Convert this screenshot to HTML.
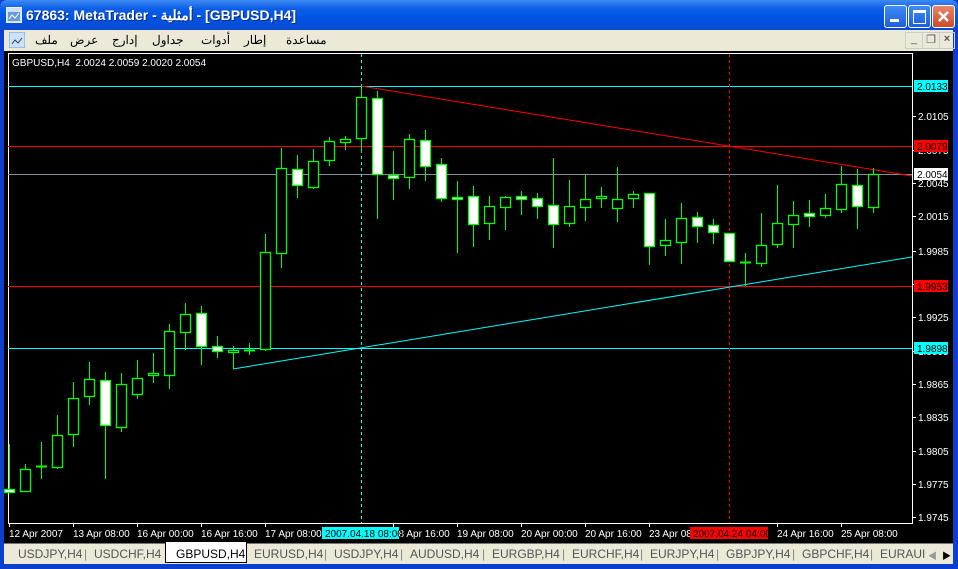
<!DOCTYPE html>
<html><head><meta charset="utf-8"><style>
body{margin:0;width:958px;height:569px;overflow:hidden;background:#0a3fd0;font-family:"Liberation Sans","Noto Sans CJK SC",sans-serif;position:relative}
#title{position:absolute;left:0;top:0;width:958px;height:30px;background:linear-gradient(#3d8bf5,#0a5ee6 30%,#0054e3 60%,#0a4bd0);border-radius:7px 7px 0 0}
#title .t{position:absolute;left:26px;top:7px;color:#fff;font-weight:bold;font-size:14px;text-shadow:1px 1px #0a2a80}
.wb{position:absolute;top:5px;width:21px;height:21px;border:1px solid #fff;border-radius:3px;background:linear-gradient(#3f8cf3,#1d5ee0)}
#menu{position:absolute;left:4px;top:30px;width:949px;height:21px;background:#ece9d8}
#menu span{position:absolute;top:3px;font-size:12px;color:#000}
#chart{position:absolute;left:4px;top:51px;width:949px;height:492px;background:#000}
#tabs{position:absolute;left:4px;top:543px;width:949px;height:20px;background:#ece9d8;border-top:1px solid #777}
#tabs span{position:absolute;top:3px;font-size:12px;color:#555}
#sv{position:absolute;left:0;top:0}
</style></head><body>
<div id="title">
<svg style="position:absolute;left:6px;top:7px" width="16" height="16"><rect x="0" y="0" width="16" height="16" fill="#cfe0f8" stroke="#fff"/><rect x="2" y="5" width="12" height="9" fill="#6a9ad8"/><path d="M3 12l3-4 3 3 4-5" stroke="#fff" fill="none"/></svg>
<div class="t">67863: MetaTrader - أمثلية - [GBPUSD,H4]</div>
<div class="wb" style="left:884px"><div style="position:absolute;left:5px;top:13px;width:9px;height:3px;background:#fff"></div></div>
<div class="wb" style="left:908px"><div style="position:absolute;left:4px;top:4px;width:11px;height:10px;border:1px solid #fff;border-top-width:3px"></div></div>
<div class="wb" style="left:932px;background:linear-gradient(#e8876a,#c94a2a)"><svg width="21" height="21"><path d="M6 6l9 9M15 6l-9 9" stroke="#fff" stroke-width="2.5"/></svg></div>
</div>
<div id="menu">
<svg style="position:absolute;left:5px;top:2px" width="16" height="16"><rect x="0" y="0" width="16" height="16" fill="#cfe0f8" stroke="#6a9ad8"/><path d="M3 12l3-4 3 3 4-5" stroke="#246" fill="none"/></svg>
<span style="left:31px">ملف</span><span style="left:66px">عرض</span><span style="left:108px">إدارج</span><span style="left:148px">جداول</span><span style="left:197px">أدوات</span><span style="left:240px">إطار</span><span style="left:282px">مساعدة</span>
<div style="position:absolute;left:901px;top:2px;width:16px;height:15px;border:1px solid #ccc;font-size:11px;text-align:center;color:#555">_</div>
<div style="position:absolute;left:918px;top:2px;width:16px;height:15px;border:1px solid #ccc;font-size:11px;text-align:center;color:#555">❐</div>
<div style="position:absolute;left:935px;top:2px;width:14px;height:15px;border:1px solid #ccc;font-size:11px;text-align:center;color:#555;font-weight:bold">×</div>
</div>
<div id="chart"></div>
<div id="tabs">
<span style="left:14px">USDJPY,H4</span><span style="left:80px;color:#888">|</span><span style="left:90px">USDCHF,H4</span>
<div style="position:absolute;left:161px;top:-2px;width:80px;height:20px;background:#fff;border:1px solid #000;border-top:none"></div><span style="left:172px;color:#000">GBPUSD,H4</span>
<span style="left:250px">EURUSD,H4</span><span style="left:320px;color:#888">|</span><span style="left:330px">USDJPY,H4</span><span style="left:396px;color:#888">|</span><span style="left:406px">AUDUSD,H4</span><span style="left:478px;color:#888">|</span><span style="left:488px">EURGBP,H4</span><span style="left:558px;color:#888">|</span><span style="left:568px">EURCHF,H4</span><span style="left:636px;color:#888">|</span><span style="left:646px">EURJPY,H4</span><span style="left:712px;color:#888">|</span><span style="left:722px">GBPJPY,H4</span><span style="left:788px;color:#888">|</span><span style="left:798px">GBPCHF,H4</span><span style="left:866px;color:#888">|</span><span style="left:876px">EURAUI</span>
<span style="left:924px;color:#999;font-size:9px;top:5px">◀</span><span style="left:938px;color:#000;font-size:9px;top:5px">▶</span>
</div>
<svg id="sv" width="958" height="569"></svg>
<script>
var c=[[9,444,492,489,492,1],[25,464,491,469,491,0],[41,442,479,466,467,0],[57,415,469,435,467,0],[73,382,447,398,434,0],[89,362,405,379,396,0],[105,372,479,380,425,1],[121,373,432,384,427,0],[137,360,399,378,394,0],[153,353,383,373,375,0],[169,324,389,331,375,0],[185,303,350,314,332,0],[201,306,365,313,346,1],[217,336,358,346,351,1],[233,346,369,350,352,0],[249,343,355,350,351,0],[265,234,351,252,349,0],[281,148,268,168,253,0],[297,155,198,169,185,1],[313,149,189,161,187,0],[329,137,166,141,160,0],[345,136,150,139,142,0],[361,86,153,97,138,0],[377,91,219,98,174,1],[393,151,200,175,178,1],[409,134,189,139,177,0],[425,130,181,140,166,1],[441,158,202,164,198,1],[457,181,253,197,199,1],[473,186,247,196,224,1],[489,196,240,206,223,0],[505,196,230,197,207,0],[521,191,215,196,199,1],[537,193,219,198,206,1],[553,158,248,205,224,1],[569,180,227,206,223,0],[585,174,221,199,207,0],[601,187,208,196,198,0],[617,167,222,199,208,0],[633,191,208,194,198,0],[649,193,265,193,246,1],[665,219,256,240,245,0],[681,203,264,218,242,0],[697,212,243,217,226,1],[713,219,244,225,232,1],[729,233,262,233,261,1],[745,253,286,262,262,0],[761,213,267,245,263,0],[777,185,248,223,244,0],[793,201,248,215,224,0],[809,200,227,213,216,1],[825,194,218,208,215,0],[841,166,213,184,209,0],[857,169,229,185,206,1],[873,168,213,174,207,0]];
var s='';
function L(x1,y1,x2,y2,col,ex){s+='<line x1="'+x1+'" y1="'+y1+'" x2="'+x2+'" y2="'+y2+'" stroke="'+col+'" '+(ex||'')+'/>';}
function T(x,y,t,col,ex){s+='<text x="'+x+'" y="'+y+'" fill="'+col+'" font-family="Liberation Sans,sans-serif" font-size="10" '+(ex||'')+'>'+t+'</text>';}
s+='<rect x="8.5" y="53.5" width="904" height="470" fill="none" stroke="#fff"/>';
var ce='shape-rendering="crispEdges"';
L(8,86.5,912,86.5,'#00ffff',ce);L(8,146.5,912,146.5,'#ff0000',ce);L(8,174.5,912,174.5,'#8090a0',ce);L(8,286.5,912,286.5,'#ff0000',ce);L(8,348.5,912,348.5,'#00ffff',ce);
L(361.5,54,361.5,523,'#00ffff','stroke-dasharray="3,3"');L(729.5,54,729.5,523,'#ff0000','stroke-dasharray="3,3"');
L(361,86,912,176,'#ff0000');L(233,369,912,257,'#00ffff');L(233.5,350,233.5,369,'#00ff00');
c.forEach(function(k){var x=k[0]+.5;L(x,k[1],x,k[2],'#00ff00',ce);var h=k[4]-k[3];
if(h<2){L(k[0]-5,k[3]+.5,k[0]+6,k[3]+.5,'#00ff00','stroke-width="2"');}
else s+='<rect x="'+(k[0]-4.5)+'" y="'+(k[3]+.5)+'" width="10" height="'+h+'" fill="'+(k[5]?'#fff':'#000')+'" stroke="#00ff00" stroke-width="1.3"/>';});
var pl=[[116,'2.0105'],[150,'2.0075'],[183,'2.0045'],[216,'2.0015'],[251,'1.9985'],[284,'1.9955'],[317,'1.9925'],[351,'1.9895'],[384,'1.9865'],[417,'1.9835'],[451,'1.9805'],[484,'1.9775'],[517,'1.9745']];
pl.forEach(function(p){L(913,p[0]+.5,916,p[0]+.5,'#fff');T(918,p[0]+4,p[1],'#fff');});
function lab(y,t,bg,fg){s+='<rect x="914" y="'+(y-6)+'" width="34" height="12" fill="'+bg+'"/>';T(917,y+4,t,fg);}
lab(86,'2.0133','#00ffff','#000');lab(146,'2.0079','#ff0000','#000');lab(174,'2.0054','#fff','#000');lab(286,'1.9953','#ff0000','#000');lab(348,'1.9898','#00ffff','#000');
var tl=[[9,'12 Apr 2007'],[73,'13 Apr 08:00'],[137,'16 Apr 00:00'],[201,'16 Apr 16:00'],[265,'17 Apr 08:00'],[393,'18 Apr 16:00'],[457,'19 Apr 08:00'],[521,'20 Apr 00:00'],[585,'20 Apr 16:00'],[649,'23 Apr 08'],[777,'24 Apr 16:00'],[841,'25 Apr 08:00']];
tl.forEach(function(p){L(p[0]+.5,523,p[0]+.5,527,'#fff');T(p[0],537,p[1],'#fff');});
s+='<rect x="322" y="527" width="77" height="12" fill="#00ffff"/>';T(325,537,'2007.04.18 08:00','#000');
s+='<rect x="690" y="527" width="78" height="12" fill="#ff0000"/>';T(693,537,'2007.04.24 04:00','#000');
T(12,66,'GBPUSD,H4&#160; 2.0024 2.0059 2.0020 2.0054','#fff','font-size="10"');
document.getElementById('sv').innerHTML=s;
</script>
</body></html>
